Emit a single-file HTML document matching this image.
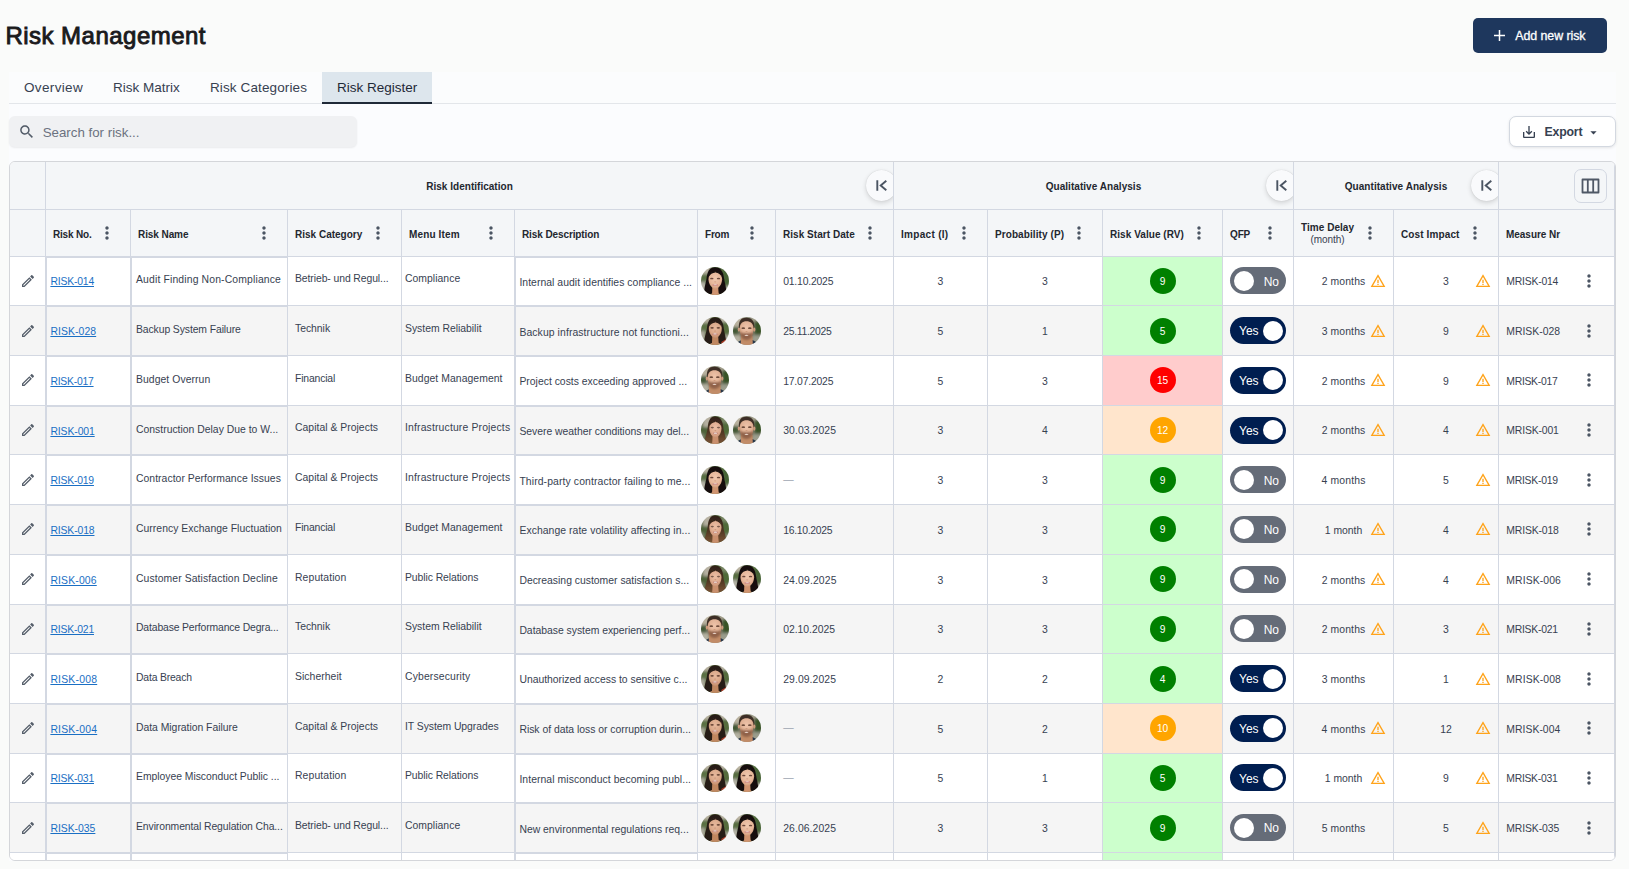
<!DOCTYPE html>
<html><head><meta charset="utf-8"><title>Risk Management</title><style>
*{box-sizing:border-box;margin:0;padding:0}
html,body{width:1629px;height:869px;overflow:hidden}
body{background:#fafbfa;font-family:"Liberation Sans",sans-serif;color:#1f2937;position:relative}
.abs{position:absolute}
h1{position:absolute;left:5.400px;top:20.200px;font-size:24px;line-height:32px;font-weight:400;color:#1a1a1c;-webkit-text-stroke:.9px #1a1a1c;letter-spacing:.48px;white-space:nowrap}
.addbtn{position:absolute;left:1473px;top:18px;width:134px;height:35px;border-radius:5px;background:#1e375d;color:#fff;font-size:12.4px;-webkit-text-stroke:.3px #fff}
.addbtn span{position:absolute;letter-spacing:-.07px;left:42.300px;top:10.800px;line-height:15px;white-space:nowrap}
.addbtn svg{position:absolute;left:20px;top:11px;width:13px;height:13px}
.tabs{position:absolute;left:9px;top:72px;width:1607px;height:32px;background:#fbfcfd;border-bottom:1px solid #e3e6ea}
.tab{position:absolute;top:0;height:32px;font-size:13.5px;line-height:16px;color:#374151;padding:7.500px 0 0 15px;white-space:nowrap}
.tab.on{background:#dde6ed;border-bottom:2px solid #1f2937;color:#1f2937}
.search{position:absolute;left:9px;top:116px;width:348px;height:31px;border-radius:6px;background:#f0f1f3;box-shadow:0 1px 2px rgba(0,0,0,.07)}
.search svg{position:absolute;left:8.800px;top:6.800px;width:17.500px;height:17.500px}
.search span{position:absolute;left:33.700px;top:8.500px;font-size:13.3px;line-height:16px;color:#6b7280;white-space:nowrap}
.export{position:absolute;left:1509px;top:116px;width:107px;height:31px;border-radius:7px;background:#fff;border:1px solid #d3d8e0;box-shadow:0 1px 3px rgba(0,0,0,.10)}
.export .dl{position:absolute;left:11.100px;top:7px;width:16px;height:16px}
.export span{position:absolute;left:34.600px;top:7px;letter-spacing:-.2px;font-size:12.300px;line-height:16px;font-weight:700;color:#374151;white-space:nowrap}
.export .car{position:absolute;left:76.100px;top:8px;width:15px;height:15px}

.tbl{position:absolute;left:9px;top:161px;width:1607px;height:700px;border:1px solid #d4d6da;border-radius:6px;overflow:hidden;background:#fff}
.hg,.hc{position:absolute;background:#f4f6f8;border-right:1px solid #d3d8e2;border-bottom:1px solid #d3d8e2;overflow:hidden}
.hg{top:0;height:48px}
.hc{top:48px;height:47px}
.hg .gl{position:absolute;left:0;right:0;top:18.800px;text-align:center;font-size:10px;line-height:12px;font-weight:700;color:#23272f;white-space:nowrap}
.coll{position:absolute;right:-4px;top:8px;width:31px;height:31px;border-radius:50%;background:#f9fafc;box-shadow:0 2px 5px rgba(0,0,0,.14),0 0 1px rgba(0,0,0,.18)}
.coll svg{position:absolute;left:8px;top:8px;width:15px;height:15px}
.colbtn{position:absolute;left:75px;top:7px;width:33px;height:34px;border:1px solid #d3d8e2;border-radius:7px}
.colbtn svg{position:absolute;left:6px;top:8px;width:19px;height:16px}
.hc .hl{position:absolute;left:7px;top:18.700px;font-size:10px;line-height:12px;font-weight:700;color:#23272f;white-space:nowrap}
.hc .hd{position:absolute;right:12.700px;top:13.200px;width:20px;height:20px}
.hc .hl.two{top:12px;text-align:center;line-height:12px}
.hc .hl.two small{display:block;font-weight:400;font-size:10px;color:#374151}

.row{position:absolute;left:0;width:1605px;background:#fff;border-bottom:1px solid #d3d8e2}
.row.alt{background:#f5f5f5}
.c{position:absolute;top:0;bottom:0;border-right:1px solid #d3d8e2;font-size:10.4px;color:#374151;white-space:nowrap;overflow:hidden}
.c.bx{border:1px solid #d3d8e2;border-bottom:none}
.c>span,.c>a{position:absolute;left:8px;top:50%;line-height:12px;margin-top:-4.7px}
.c>a{color:#1a6fc4;text-decoration:underline;left:3.4px;margin-top:-5px}
.c.bx>span{left:4px}
.c-desc.bx>span{left:3.400px}
.c-date>span{left:7.200px}
.c-date.dash>span{margin-top:-6.200px}
.c .up{margin-top:-7px}
.c .up2{margin-top:-7.7px}
.c-cat>span{left:7px}.c-menu>span{left:3px}
.c.ctr>span{left:0;right:0;text-align:center}
.pen{position:absolute;left:10px;top:50%;margin-top:-8px;width:16px;height:16px}
.av{position:absolute;top:50%;margin-top:-14px;width:28px;height:28px}
.dot{width:26px;height:26px;border-radius:50%;color:#fff;text-align:center;font-size:10.200px}
.c-rv .dot{left:50%;margin-left:-13px;margin-top:-13px;line-height:28.300px;height:26px}
.rv-g{background:#ccffcc}.rv-g .dot{background:#008000}
.rv-r{background:#ffcccc}.rv-r .dot{background:#ff0000}
.rv-o{background:#ffe5cc}.rv-o .dot{background:#ffa500}
.tg{left:7px!important;width:56px;height:27px;border-radius:13.5px;background:#656c78;margin-top:-13.5px!important;color:#fff}
.tg.on{background:#001e50}
.tg b{position:absolute;top:3.5px;left:4px;width:20px;height:20px;border-radius:50%;background:#fff}
.tg.on b{left:auto;right:3px}
.tg i{position:absolute;font-style:normal;font-size:12px;line-height:14px;top:7.300px;right:7px}
.tg.on i{right:auto;left:9px}
.warn{position:absolute;top:50%;margin-top:-8px;width:16px;height:16px}
.dots{position:absolute;top:50%;margin-top:-10px;width:20px;height:20px}
.dash>span{color:#9ca3af}
.c-from .av:nth-child(1){left:3px}
.c-from .av:nth-child(2){left:35px}
.c-td .tdt{left:0;width:99px;text-align:center;margin-left:0}
.c-td .warn{left:76px}
.c-ci .cit{left:0;width:104px;text-align:center}
.c-ci .warn{left:81px}
.c-mn .dots{left:80.100px}
.panel{position:absolute;left:9px;top:72px;width:1607px;height:789px;background:#fbfcfe}
.c-mn>span{letter-spacing:-.2px}
.c-mn>span{left:7.300px}
.dot.d2{letter-spacing:-.1px}

.c-edit,.h-edit{left:0px;width:36px}
.c-no,.h-no{left:36px;width:85px}
.c-name,.h-name{left:121px;width:157px}
.c-cat,.h-cat{left:278px;width:114px}
.c-menu,.h-menu{left:392px;width:113px}
.c-desc,.h-desc{left:505px;width:183px}
.c-from,.h-from{left:688px;width:78px}
.c-date,.h-date{left:766px;width:118px}
.c-imp,.h-imp{left:884px;width:94px}
.c-prob,.h-prob{left:978px;width:115px}
.c-rv,.h-rv{left:1093px;width:120px}
.c-qfp,.h-qfp{left:1213px;width:71px}
.c-td,.h-td{left:1284px;width:100px}
.c-ci,.h-ci{left:1384px;width:105px}
.c-mn,.h-mn{left:1489px;width:116px}
</style></head><body>
<svg width="0" height="0" style="position:absolute">
<defs>
<path id="i-edit" fill="#555e6a" d="m14.06 9.02.92.92L5.92 19H5v-.92zM17.66 3c-.25 0-.51.1-.7.29l-1.83 1.83 3.75 3.75 1.83-1.83c.39-.39.39-1.02 0-1.41l-2.34-2.34c-.2-.2-.45-.29-.71-.29m-3.6 3.19L3 17.25V21h3.75L17.81 9.94z"/>
<path id="i-dots" fill="#4b5563" d="M12 8c1.1 0 2-.9 2-2s-.9-2-2-2-2 .9-2 2 .9 2 2 2m0 2c-1.1 0-2 .9-2 2s.9 2 2 2 2-.9 2-2-.9-2-2-2m0 6c-1.1 0-2 .9-2 2s.9 2 2 2 2-.9 2-2-.9-2-2-2"/>
<g id="i-warn" fill="#ffa31a"><path d="M12 5.99 19.53 19H4.47zM12 2 1 21h22z"/><path d="M13 16h-2v2h2zm0-6h-2v5h2z"/></g>
<radialGradient id="skA" cx=".5" cy=".4" r=".62"><stop offset="0" stop-color="#f0c8ae"/><stop offset=".65" stop-color="#e6b699"/><stop offset="1" stop-color="#cf9877"/></radialGradient>
<radialGradient id="skB" cx=".5" cy=".4" r=".62"><stop offset="0" stop-color="#e7b99d"/><stop offset=".65" stop-color="#d9a788"/><stop offset="1" stop-color="#bf8867"/></radialGradient>
<radialGradient id="skC" cx=".5" cy=".4" r=".62"><stop offset="0" stop-color="#ebbfa5"/><stop offset=".65" stop-color="#deab8f"/><stop offset="1" stop-color="#c48d6e"/></radialGradient>
<radialGradient id="skM" cx=".5" cy=".35" r=".65"><stop offset="0" stop-color="#eec4aa"/><stop offset=".6" stop-color="#e0b195"/><stop offset="1" stop-color="#c08a69"/></radialGradient>
<linearGradient id="hC" x1="0" y1="0" x2="0" y2="1"><stop offset="0" stop-color="#2f2018"/><stop offset=".45" stop-color="#4a3221"/><stop offset="1" stop-color="#805a38"/></linearGradient>
<filter id="b3" x="-30%" y="-30%" width="160%" height="160%"><feGaussianBlur stdDeviation="1"/></filter>
<clipPath id="cc"><circle cx="14" cy="14" r="14"/></clipPath>
<filter id="b0" x="-20%" y="-20%" width="140%" height="140%"><feGaussianBlur stdDeviation="1.6"/></filter>
<filter id="b1" x="-20%" y="-20%" width="140%" height="140%"><feGaussianBlur stdDeviation="0.62"/></filter>
<filter id="b2" x="-20%" y="-20%" width="140%" height="140%"><feGaussianBlur stdDeviation="0.5"/></filter>
<g id="av-A" clip-path="url(#cc)">
<g filter="url(#b0)">
<rect x="-4" y="-4" width="36" height="36" fill="#586e43"/>
<rect x="-4" y="-4" width="13" height="11" fill="#b9b3a2"/>
<rect x="-4" y="15" width="9" height="17" fill="#b4b2a6"/>
<rect x="22" y="2" width="10" height="17" fill="#466336"/>
<rect x="23" y="19" width="9" height="13" fill="#a5a696"/>
</g>
<g filter="url(#b1)">
<path d="M14 .2C8 .2 6.200 5.500 5.600 11 5 16 3.200 20 3.200 25.500L10 30h9l6.300-4.500C25.300 20 23.600 15 23 11 22.400 5 20 .2 14 .2Z" fill="#15100e"/>
<ellipse cx="14.300" cy="29.500" rx="6.500" ry="3.500" fill="#dca180"/><path d="M11.400 19 10.900 30h7l-.8-11Z" fill="#d0946f"/>
<path d="M14.300 4.800C10.200 4.800 7.500 8 7.500 12.300 7.500 17.200 10.800 21.800 14.300 21.800S21.100 17.200 21.100 12.300C21.100 8 18.300 4.800 14.300 4.800Z" fill="url(#skA)"/>
<path d="M7.600 10C8 6.500 10.500 4.300 14.500 4.300L14.300 5.600C11.500 5.800 9 7.500 7.600 10Z" fill="#15100e"/>
<path d="M21 10.500C20.600 6.800 18 4.300 14.300 4.300L14.500 5.600C17.500 5.800 19.800 7.800 21 10.500Z" fill="#15100e"/>
</g>
<g filter="url(#b2)">
<ellipse cx="10.800" cy="11.500" rx="1.700" ry=".85" fill="#6d4a3c"/>
<ellipse cx="17.500" cy="11.500" rx="1.700" ry=".85" fill="#6d4a3c"/>
<ellipse cx="14.200" cy="14.800" rx="1.100" ry=".6" fill="#d49f86"/>
<ellipse cx="14.200" cy="18" rx="3" ry="1.050" fill="#cc827a"/>
<ellipse cx="14.200" cy="17.700" rx="1.900" ry=".55" fill="#f0dfd6"/>
</g></g>
<g id="av-B" clip-path="url(#cc)">
<g filter="url(#b0)">
<rect x="-4" y="-4" width="36" height="36" fill="#5a6f43"/>
<rect x="-4" y="-4" width="13" height="10" fill="#b5af9e"/>
<rect x="-4" y="14" width="8" height="18" fill="#aeab9d"/>
<rect x="19" y="-4" width="9" height="9" fill="#bfbaab"/>
<rect x="22" y="5" width="10" height="14" fill="#546c3d"/>
<rect x="23" y="18" width="9" height="14" fill="#a8a898"/>
</g>
<g filter="url(#b1)">
<path d="M14 .2C8.500 .2 6.500 5.500 6 11 5.400 16 3.200 20 3.200 25.500L10 30h9l6.200-5C24.700 20 23.300 15 22.800 11 22.200 5 19.500 .2 14 .2Z" fill="#281c16"/>
<path d="M20.300 25 24.800 22.300 25.500 26.500 21 29.500Z" fill="#b03a28"/>
<ellipse cx="14.300" cy="29.300" rx="6.500" ry="3.800" fill="#cf9773"/><path d="M11.300 18.500 10.800 30h7.200l-.9-11.500Z" fill="#c08761"/>
<path d="M14.300 4.600C10.400 4.600 7.800 7.600 7.800 11.800 7.800 16.500 11 21 14.300 21S20.800 16.500 20.800 11.800C20.800 7.600 18.100 4.600 14.300 4.600Z" fill="url(#skB)"/>
<path d="M8 9.500C8.400 6.200 10.800 4.100 14.500 4.100L14.300 5.400C11.700 5.600 9.300 7.200 8 9.500Z" fill="#281c16"/>
<path d="M20.600 10C20.200 6.500 17.800 4.100 14.300 4.100L14.500 5.400C17.300 5.600 19.500 7.500 20.600 10Z" fill="#281c16"/>
</g>
<g filter="url(#b2)">
<ellipse cx="11.100" cy="10.800" rx="1.700" ry=".85" fill="#694738"/>
<ellipse cx="17.300" cy="10.800" rx="1.700" ry=".85" fill="#694738"/>
<ellipse cx="14.100" cy="14" rx="1.100" ry=".6" fill="#c99478"/>
<ellipse cx="14" cy="17.200" rx="2.900" ry="1.050" fill="#c17f74"/>
<ellipse cx="14" cy="16.900" rx="1.800" ry=".55" fill="#e9dbd1"/>
</g></g>
<g id="av-C" clip-path="url(#cc)">
<g filter="url(#b0)">
<rect x="-4" y="-4" width="36" height="36" fill="#4d6238"/>
<rect x="2" y="-4" width="9" height="15" fill="#b6b0a0"/>
<rect x="-4" y="18" width="7" height="14" fill="#8a8d7a"/>
<rect x="20" y="-4" width="12" height="11" fill="#7a8866"/>
<rect x="22" y="8" width="10" height="12" fill="#506a37"/>
<rect x="24" y="19" width="8" height="13" fill="#8d9280"/>
</g>
<g filter="url(#b1)">
<path d="M14 .5C9 .5 7.200 5.500 6.800 11 6.400 16 4.200 20 3.700 26L10 30h9l6.200-4.500C24.700 20 22.500 15 22.200 11 21.800 5 19 .5 14 .5Z" fill="url(#hC)"/>
<ellipse cx="14.400" cy="29.500" rx="5.500" ry="3.300" fill="#d8a080"/><path d="M11.600 19 11.100 30h6.800l-.8-11Z" fill="#c98f6d"/>
<path d="M14.400 5C10.800 5 8.300 8 8.300 12.200 8.300 17 11.200 21.500 14.400 21.500S20.500 17 20.500 12.200C20.500 8 17.900 5 14.400 5Z" fill="url(#skC)"/>
<path d="M8.400 10C8.800 6.600 11 4.500 14.600 4.500L14.400 5.900C12 6.100 9.700 7.700 8.400 10Z" fill="#36251a"/>
<path d="M20.400 10.500C20 7 17.800 4.500 14.400 4.500L14.600 5.900C17.200 6.100 19.300 8 20.400 10.500Z" fill="#36251a"/>
</g>
<g filter="url(#b2)">
<ellipse cx="11.300" cy="11.600" rx="1.600" ry=".8" fill="#7a5c4e"/>
<ellipse cx="17.500" cy="11.600" rx="1.600" ry=".8" fill="#7a5c4e"/>
<ellipse cx="14.400" cy="14.600" rx="1" ry=".6" fill="#cb977d"/>
<ellipse cx="14.400" cy="17.300" rx="2.600" ry="1.100" fill="#c28075"/>
<ellipse cx="14.400" cy="17.200" rx="1.700" ry=".65" fill="#efe4db"/>
</g></g>
<g id="av-M" clip-path="url(#cc)">
<g filter="url(#b0)">
<rect x="-4" y="-4" width="36" height="36" fill="#888b78"/>
<rect x="-4" y="-4" width="14" height="14" fill="#b8b19e"/>
<rect x="-4" y="10" width="10" height="8" fill="#425836"/>
<rect x="-4" y="18" width="12" height="14" fill="#b3b0a0"/>
<rect x="19" y="-4" width="6" height="9" fill="#a8a390"/>
<rect x="21" y="4" width="11" height="14" fill="#375225"/>
<rect x="19" y="18" width="13" height="14" fill="#9a9c8c"/>
</g>
<g filter="url(#b1)">
<path d="M4 25.500 8.500 23 19.500 23 24 25.500 22 30 6 30Z" fill="#25354a"/>
<path d="M13.200 .8C8 .8 5.600 4 5.800 10.500L7.500 12.500 20 12.500 21.400 10.500C21.600 4 18.500 .8 13.200 .8Z" fill="#3d2f25"/>
<path d="M8 19 7.600 30h12.300L19.500 19Z" fill="#c28c68"/>
<ellipse cx="5.900" cy="12.600" rx="1.100" ry="2.100" fill="#cf9b7e"/>
<ellipse cx="21.300" cy="12.600" rx="1.100" ry="2.100" fill="#cf9b7e"/>
<path d="M13.500 4.300C9.500 4.300 6.700 6.500 6.700 11.500 6.700 17.500 9.800 22.600 13.500 22.600S20.500 17.500 20.500 11.500C20.500 6.500 17.500 4.300 13.500 4.300Z" fill="url(#skM)"/>
</g>
<g filter="url(#b3)"><path d="M6.800 14C6.900 20.500 10 22.800 13.500 22.800S20.200 20.500 20.400 14C19.200 16.500 17 16.300 13.500 16.300S8 16.500 6.800 14Z" fill="#7c5139" opacity=".78"/></g>
<g filter="url(#b2)">
<ellipse cx="10.300" cy="11.200" rx="1.800" ry=".9" fill="#6d4b3b"/>
<ellipse cx="16.800" cy="11.200" rx="1.800" ry=".9" fill="#6d4b3b"/>
<ellipse cx="13.500" cy="14.500" rx="1.200" ry=".6" fill="#cf9a7d"/>
<ellipse cx="13.500" cy="18.200" rx="2.700" ry="1.100" fill="#9a6a55"/><ellipse cx="13.500" cy="18.300" rx="1.900" ry=".65" fill="#ead7ca"/>
</g></g>
</defs>
</svg>

<div class="panel"></div>
<h1>Risk Management</h1>
<div class="addbtn"><svg viewBox="0 0 13 13"><path d="M6.5 1v11M1 6.5h11" stroke="#fff" stroke-width="1.5" fill="none"/></svg><span>Add new risk</span></div>
<div class="tabs">
<div class="tab" style="left:0;width:89px;letter-spacing:.35px">Overview</div>
<div class="tab" style="left:89px;width:97px">Risk Matrix</div>
<div class="tab" style="left:186px;width:127px;letter-spacing:.12px">Risk Categories</div>
<div class="tab on" style="left:313px;width:110px">Risk Register</div>
</div>
<div class="search"><svg viewBox="0 0 24 24"><path fill="#535c69" d="M15.5 14h-.79l-.28-.27C15.41 12.59 16 11.11 16 9.5 16 5.91 13.09 3 9.5 3S3 5.91 3 9.5 5.91 16 9.5 16c1.61 0 3.09-.59 4.23-1.57l.27.28v.79l5 4.99L20.49 19zm-6 0C7.01 14 5 11.99 5 9.5S7.01 5 9.5 5 14 7.01 14 9.5 11.990 14 9.5 14"/></svg><span>Search for risk...</span></div>
<div class="export"><svg class="dl" viewBox="0 0 24 24"><path fill="#374151" d="M19 12v7H5v-7H3v7c0 1.1.9 2 2 2h14c1.1 0 2-.9 2-2v-7zm-6 .67 2.59-2.58L17 11.500l-5 5-5-5 1.41-1.41L11 12.67V3h2z"/></svg><span>Export</span><svg class="car" viewBox="0 0 24 24"><path fill="#374151" d="m7 10 5 5 5-5z"/></svg></div>

<div class="tbl">
<div class="hg" style="left:0px;width:36px"></div>
<div class="hg" style="left:36px;width:848px"><div class="gl" style="letter-spacing:0.021px">Risk Identification</div><div class="coll"><svg viewBox="0 0 15 15"><path d="M3.300 2.300v10.400M12.300 2.800 6.700 7.500l5.600 4.700" stroke="#4b5563" stroke-width="1.900" fill="none"/></svg></div></div>
<div class="hg" style="left:884px;width:400px"><div class="gl" style="letter-spacing:0.044px">Qualitative Analysis</div><div class="coll"><svg viewBox="0 0 15 15"><path d="M3.300 2.300v10.400M12.300 2.800 6.700 7.500l5.600 4.700" stroke="#4b5563" stroke-width="1.900" fill="none"/></svg></div></div>
<div class="hg" style="left:1284px;width:205px"><div class="gl" style="letter-spacing:0.059px">Quantitative Analysis</div><div class="coll"><svg viewBox="0 0 15 15"><path d="M3.300 2.300v10.400M12.300 2.800 6.700 7.500l5.600 4.700" stroke="#4b5563" stroke-width="1.900" fill="none"/></svg></div></div>
<div class="hg" style="left:1489px;width:116px"><div class="colbtn"><svg viewBox="0 0 19 16"><path d="M1.5 1.5h16v13h-16zM6.8 1.5v13M12.200 1.5v13" stroke="#4f5866" stroke-width="1.800" fill="none" stroke-linejoin="round"/></svg></div></div>
<div class="hc h-edit"></div>
<div class="hc h-no"><div class="hl" style="letter-spacing:-0.188px">Risk No.</div><svg class="hd" viewBox="0 0 24 24"><use href="#i-dots"/></svg></div>
<div class="hc h-name"><div class="hl" style="letter-spacing:-0.080px">Risk Name</div><svg class="hd" viewBox="0 0 24 24"><use href="#i-dots"/></svg></div>
<div class="hc h-cat"><div class="hl" style="letter-spacing:0.004px">Risk Category</div><svg class="hd" viewBox="0 0 24 24"><use href="#i-dots"/></svg></div>
<div class="hc h-menu"><div class="hl" style="letter-spacing:0.143px">Menu Item</div><svg class="hd" viewBox="0 0 24 24"><use href="#i-dots"/></svg></div>
<div class="hc h-desc"><div class="hl" style="letter-spacing:-0.101px">Risk Description</div></div>
<div class="hc h-from"><div class="hl" style="letter-spacing:-0.233px">From</div><svg class="hd" viewBox="0 0 24 24"><use href="#i-dots"/></svg></div>
<div class="hc h-date"><div class="hl" style="letter-spacing:0.040px">Risk Start Date</div><svg class="hd" viewBox="0 0 24 24"><use href="#i-dots"/></svg></div>
<div class="hc h-imp"><div class="hl" style="letter-spacing:0.305px">Impact (I)</div><svg class="hd" viewBox="0 0 24 24"><use href="#i-dots"/></svg></div>
<div class="hc h-prob"><div class="hl" style="letter-spacing:0.086px">Probability (P)</div><svg class="hd" viewBox="0 0 24 24"><use href="#i-dots"/></svg></div>
<div class="hc h-rv"><div class="hl" style="letter-spacing:0.051px">Risk Value (RV)</div><svg class="hd" viewBox="0 0 24 24"><use href="#i-dots"/></svg></div>
<div class="hc h-qfp"><div class="hl" style="letter-spacing:-0.131px">QFP</div><svg class="hd" viewBox="0 0 24 24"><use href="#i-dots"/></svg></div>
<div class="hc h-td"><div class="hl two"><span style="letter-spacing:0.042px">Time Delay</span><small style="letter-spacing:-0.092px">(month)</small></div><svg class="hd" viewBox="0 0 24 24"><use href="#i-dots"/></svg></div>
<div class="hc h-ci"><div class="hl" style="letter-spacing:0.117px">Cost Impact</div><svg class="hd" viewBox="0 0 24 24"><use href="#i-dots"/></svg></div>
<div class="hc h-mn"><div class="hl" style="letter-spacing:-0.030px">Measure Nr</div></div>
<div class="row" style="top:94.65px;height:49.7px">
<div class="c c-edit"><svg class="pen" viewBox="0 0 24 24"><use href="#i-edit"/></svg></div>
<div class="c c-no bx"><a style="letter-spacing:-0.180px">RISK-014</a></div>
<div class="c c-name bx"><span class="up" style="letter-spacing:0.147px">Audit Finding Non-Compliance</span></div>
<div class="c c-cat"><span class="up2" style="letter-spacing:-0.086px">Betrieb- und Regul...</span></div>
<div class="c c-menu"><span class="up2" style="letter-spacing:0.036px">Compliance</span></div>
<div class="c c-desc bx"><span style="letter-spacing:0.042px">Internal audit identifies compliance ...</span></div>
<div class="c c-from"><svg class="av" viewBox="0 0 28 28"><use href="#av-A"/></svg></div>
<div class="c c-date"><span style="letter-spacing:-0.191px">01.10.2025</span></div>
<div class="c c-imp ctr"><span>3</span></div>
<div class="c c-prob ctr"><span>3</span></div>
<div class="c c-rv rv-g"><span class="dot">9</span></div>
<div class="c c-qfp"><span class="tg"><b></b><i>No</i></span></div>
<div class="c c-td"><span class="tdt" style="letter-spacing:0.121px">2 months</span><svg class="warn" viewBox="0 0 24 24"><use href="#i-warn"/></svg></div>
<div class="c c-ci"><span class="cit">3</span><svg class="warn" viewBox="0 0 24 24"><use href="#i-warn"/></svg></div>
<div class="c c-mn"><span style="letter-spacing:-0.202px">MRISK-014</span><svg class="dots" viewBox="0 0 24 24"><use href="#i-dots"/></svg></div>
</div>
<div class="row alt" style="top:144.35px;height:49.7px">
<div class="c c-edit"><svg class="pen" viewBox="0 0 24 24"><use href="#i-edit"/></svg></div>
<div class="c c-no bx"><a style="letter-spacing:0.091px">RISK-028</a></div>
<div class="c c-name bx"><span class="up" style="letter-spacing:-0.097px">Backup System Failure</span></div>
<div class="c c-cat"><span class="up2" style="letter-spacing:-0.022px">Technik</span></div>
<div class="c c-menu"><span class="up2" style="letter-spacing:-0.013px">System Reliabilit</span></div>
<div class="c c-desc bx"><span style="letter-spacing:0.098px">Backup infrastructure not functioni...</span></div>
<div class="c c-from"><svg class="av" viewBox="0 0 28 28"><use href="#av-B"/></svg><svg class="av" viewBox="0 0 28 28"><use href="#av-M"/></svg></div>
<div class="c c-date"><span style="letter-spacing:-0.293px">25.11.2025</span></div>
<div class="c c-imp ctr"><span>5</span></div>
<div class="c c-prob ctr"><span>1</span></div>
<div class="c c-rv rv-g"><span class="dot">5</span></div>
<div class="c c-qfp"><span class="tg on"><i>Yes</i><b></b></span></div>
<div class="c c-td"><span class="tdt" style="letter-spacing:0.121px">3 months</span><svg class="warn" viewBox="0 0 24 24"><use href="#i-warn"/></svg></div>
<div class="c c-ci"><span class="cit">9</span><svg class="warn" viewBox="0 0 24 24"><use href="#i-warn"/></svg></div>
<div class="c c-mn"><span style="letter-spacing:-0.002px">MRISK-028</span><svg class="dots" viewBox="0 0 24 24"><use href="#i-dots"/></svg></div>
</div>
<div class="row" style="top:194.05px;height:49.7px">
<div class="c c-edit"><svg class="pen" viewBox="0 0 24 24"><use href="#i-edit"/></svg></div>
<div class="c c-no bx"><a style="letter-spacing:-0.238px">RISK-017</a></div>
<div class="c c-name bx"><span class="up" style="letter-spacing:0.065px">Budget Overrun</span></div>
<div class="c c-cat"><span class="up2" style="letter-spacing:-0.162px">Financial</span></div>
<div class="c c-menu"><span class="up2" style="letter-spacing:0.064px">Budget Management</span></div>
<div class="c c-desc bx"><span style="letter-spacing:0.006px">Project costs exceeding approved ...</span></div>
<div class="c c-from"><svg class="av" viewBox="0 0 28 28"><use href="#av-M"/></svg></div>
<div class="c c-date"><span style="letter-spacing:-0.191px">17.07.2025</span></div>
<div class="c c-imp ctr"><span>5</span></div>
<div class="c c-prob ctr"><span>3</span></div>
<div class="c c-rv rv-r"><span class="dot d2">15</span></div>
<div class="c c-qfp"><span class="tg on"><i>Yes</i><b></b></span></div>
<div class="c c-td"><span class="tdt" style="letter-spacing:0.121px">2 months</span><svg class="warn" viewBox="0 0 24 24"><use href="#i-warn"/></svg></div>
<div class="c c-ci"><span class="cit">9</span><svg class="warn" viewBox="0 0 24 24"><use href="#i-warn"/></svg></div>
<div class="c c-mn"><span style="letter-spacing:-0.290px">MRISK-017</span><svg class="dots" viewBox="0 0 24 24"><use href="#i-dots"/></svg></div>
</div>
<div class="row alt" style="top:243.75px;height:49.7px">
<div class="c c-edit"><svg class="pen" viewBox="0 0 24 24"><use href="#i-edit"/></svg></div>
<div class="c c-no bx"><a style="letter-spacing:-0.095px">RISK-001</a></div>
<div class="c c-name bx"><span class="up" style="letter-spacing:0.004px">Construction Delay Due to W...</span></div>
<div class="c c-cat"><span class="up2" style="letter-spacing:0.024px">Capital &amp; Projects</span></div>
<div class="c c-menu"><span class="up2" style="letter-spacing:0.157px">Infrastructure Projects</span></div>
<div class="c c-desc bx"><span style="letter-spacing:-0.020px">Severe weather conditions may del...</span></div>
<div class="c c-from"><svg class="av" viewBox="0 0 28 28"><use href="#av-C"/></svg><svg class="av" viewBox="0 0 28 28"><use href="#av-M"/></svg></div>
<div class="c c-date"><span style="letter-spacing:0.087px">30.03.2025</span></div>
<div class="c c-imp ctr"><span>3</span></div>
<div class="c c-prob ctr"><span>4</span></div>
<div class="c c-rv rv-o"><span class="dot d2">12</span></div>
<div class="c c-qfp"><span class="tg on"><i>Yes</i><b></b></span></div>
<div class="c c-td"><span class="tdt" style="letter-spacing:0.121px">2 months</span><svg class="warn" viewBox="0 0 24 24"><use href="#i-warn"/></svg></div>
<div class="c c-ci"><span class="cit">4</span><svg class="warn" viewBox="0 0 24 24"><use href="#i-warn"/></svg></div>
<div class="c c-mn"><span style="letter-spacing:-0.152px">MRISK-001</span><svg class="dots" viewBox="0 0 24 24"><use href="#i-dots"/></svg></div>
</div>
<div class="row" style="top:293.45px;height:49.7px">
<div class="c c-edit"><svg class="pen" viewBox="0 0 24 24"><use href="#i-edit"/></svg></div>
<div class="c c-no bx"><a style="letter-spacing:-0.188px">RISK-019</a></div>
<div class="c c-name bx"><span class="up" style="letter-spacing:0.039px">Contractor Performance Issues</span></div>
<div class="c c-cat"><span class="up2" style="letter-spacing:0.024px">Capital &amp; Projects</span></div>
<div class="c c-menu"><span class="up2" style="letter-spacing:0.157px">Infrastructure Projects</span></div>
<div class="c c-desc bx"><span style="letter-spacing:0.111px">Third-party contractor failing to me...</span></div>
<div class="c c-from"><svg class="av" viewBox="0 0 28 28"><use href="#av-A"/></svg></div>
<div class="c c-date dash"><span>—</span></div>
<div class="c c-imp ctr"><span>3</span></div>
<div class="c c-prob ctr"><span>3</span></div>
<div class="c c-rv rv-g"><span class="dot">9</span></div>
<div class="c c-qfp"><span class="tg"><b></b><i>No</i></span></div>
<div class="c c-td"><span class="tdt" style="letter-spacing:0.179px">4 months</span></div>
<div class="c c-ci"><span class="cit">5</span><svg class="warn" viewBox="0 0 24 24"><use href="#i-warn"/></svg></div>
<div class="c c-mn"><span style="letter-spacing:-0.252px">MRISK-019</span><svg class="dots" viewBox="0 0 24 24"><use href="#i-dots"/></svg></div>
</div>
<div class="row alt" style="top:343.15px;height:49.7px">
<div class="c c-edit"><svg class="pen" viewBox="0 0 24 24"><use href="#i-edit"/></svg></div>
<div class="c c-no bx"><a style="letter-spacing:-0.123px">RISK-018</a></div>
<div class="c c-name bx"><span class="up" style="letter-spacing:0.033px">Currency Exchange Fluctuation</span></div>
<div class="c c-cat"><span class="up2" style="letter-spacing:-0.162px">Financial</span></div>
<div class="c c-menu"><span class="up2" style="letter-spacing:0.064px">Budget Management</span></div>
<div class="c c-desc bx"><span style="letter-spacing:0.062px">Exchange rate volatility affecting in...</span></div>
<div class="c c-from"><svg class="av" viewBox="0 0 28 28"><use href="#av-C"/></svg></div>
<div class="c c-date"><span style="letter-spacing:-0.291px">16.10.2025</span></div>
<div class="c c-imp ctr"><span>3</span></div>
<div class="c c-prob ctr"><span>3</span></div>
<div class="c c-rv rv-g"><span class="dot">9</span></div>
<div class="c c-qfp"><span class="tg"><b></b><i>No</i></span></div>
<div class="c c-td"><span class="tdt" style="letter-spacing:-0.008px">1 month</span><svg class="warn" viewBox="0 0 24 24"><use href="#i-warn"/></svg></div>
<div class="c c-ci"><span class="cit">4</span><svg class="warn" viewBox="0 0 24 24"><use href="#i-warn"/></svg></div>
<div class="c c-mn"><span style="letter-spacing:-0.140px">MRISK-018</span><svg class="dots" viewBox="0 0 24 24"><use href="#i-dots"/></svg></div>
</div>
<div class="row" style="top:392.85px;height:49.7px">
<div class="c c-edit"><svg class="pen" viewBox="0 0 24 24"><use href="#i-edit"/></svg></div>
<div class="c c-no bx"><a style="letter-spacing:0.163px">RISK-006</a></div>
<div class="c c-name bx"><span class="up" style="letter-spacing:0.090px">Customer Satisfaction Decline</span></div>
<div class="c c-cat"><span class="up2" style="letter-spacing:0.115px">Reputation</span></div>
<div class="c c-menu"><span class="up2" style="letter-spacing:-0.074px">Public Relations</span></div>
<div class="c c-desc bx"><span style="letter-spacing:-0.003px">Decreasing customer satisfaction s...</span></div>
<div class="c c-from"><svg class="av" viewBox="0 0 28 28"><use href="#av-C"/></svg><svg class="av" viewBox="0 0 28 28"><use href="#av-A"/></svg></div>
<div class="c c-date"><span style="letter-spacing:0.143px">24.09.2025</span></div>
<div class="c c-imp ctr"><span>3</span></div>
<div class="c c-prob ctr"><span>3</span></div>
<div class="c c-rv rv-g"><span class="dot">9</span></div>
<div class="c c-qfp"><span class="tg"><b></b><i>No</i></span></div>
<div class="c c-td"><span class="tdt" style="letter-spacing:0.121px">2 months</span><svg class="warn" viewBox="0 0 24 24"><use href="#i-warn"/></svg></div>
<div class="c c-ci"><span class="cit">4</span><svg class="warn" viewBox="0 0 24 24"><use href="#i-warn"/></svg></div>
<div class="c c-mn"><span style="letter-spacing:0.110px">MRISK-006</span><svg class="dots" viewBox="0 0 24 24"><use href="#i-dots"/></svg></div>
</div>
<div class="row alt" style="top:442.55px;height:49.7px">
<div class="c c-edit"><svg class="pen" viewBox="0 0 24 24"><use href="#i-edit"/></svg></div>
<div class="c c-no bx"><a style="letter-spacing:-0.180px">RISK-021</a></div>
<div class="c c-name bx"><span class="up" style="letter-spacing:-0.143px">Database Performance Degra...</span></div>
<div class="c c-cat"><span class="up2" style="letter-spacing:-0.022px">Technik</span></div>
<div class="c c-menu"><span class="up2" style="letter-spacing:-0.013px">System Reliabilit</span></div>
<div class="c c-desc bx"><span style="letter-spacing:-0.024px">Database system experiencing perf...</span></div>
<div class="c c-from"><svg class="av" viewBox="0 0 28 28"><use href="#av-M"/></svg></div>
<div class="c c-date"><span style="letter-spacing:-0.024px">02.10.2025</span></div>
<div class="c c-imp ctr"><span>3</span></div>
<div class="c c-prob ctr"><span>3</span></div>
<div class="c c-rv rv-g"><span class="dot">9</span></div>
<div class="c c-qfp"><span class="tg"><b></b><i>No</i></span></div>
<div class="c c-td"><span class="tdt" style="letter-spacing:0.121px">2 months</span><svg class="warn" viewBox="0 0 24 24"><use href="#i-warn"/></svg></div>
<div class="c c-ci"><span class="cit">3</span><svg class="warn" viewBox="0 0 24 24"><use href="#i-warn"/></svg></div>
<div class="c c-mn"><span style="letter-spacing:-0.240px">MRISK-021</span><svg class="dots" viewBox="0 0 24 24"><use href="#i-dots"/></svg></div>
</div>
<div class="row" style="top:492.25px;height:49.7px">
<div class="c c-edit"><svg class="pen" viewBox="0 0 24 24"><use href="#i-edit"/></svg></div>
<div class="c c-no bx"><a style="letter-spacing:0.220px">RISK-008</a></div>
<div class="c c-name bx"><span class="up" style="letter-spacing:-0.177px">Data Breach</span></div>
<div class="c c-cat"><span class="up2" style="letter-spacing:0.053px">Sicherheit</span></div>
<div class="c c-menu"><span class="up2" style="letter-spacing:0.147px">Cybersecurity</span></div>
<div class="c c-desc bx"><span style="letter-spacing:-0.018px">Unauthorized access to sensitive c...</span></div>
<div class="c c-from"><svg class="av" viewBox="0 0 28 28"><use href="#av-B"/></svg></div>
<div class="c c-date"><span style="letter-spacing:0.087px">29.09.2025</span></div>
<div class="c c-imp ctr"><span>2</span></div>
<div class="c c-prob ctr"><span>2</span></div>
<div class="c c-rv rv-g"><span class="dot">4</span></div>
<div class="c c-qfp"><span class="tg on"><i>Yes</i><b></b></span></div>
<div class="c c-td"><span class="tdt" style="letter-spacing:0.121px">3 months</span></div>
<div class="c c-ci"><span class="cit">1</span><svg class="warn" viewBox="0 0 24 24"><use href="#i-warn"/></svg></div>
<div class="c c-mn"><span style="letter-spacing:0.110px">MRISK-008</span><svg class="dots" viewBox="0 0 24 24"><use href="#i-dots"/></svg></div>
</div>
<div class="row alt" style="top:541.95px;height:49.7px">
<div class="c c-edit"><svg class="pen" viewBox="0 0 24 24"><use href="#i-edit"/></svg></div>
<div class="c c-no bx"><a style="letter-spacing:0.220px">RISK-004</a></div>
<div class="c c-name bx"><span class="up" style="letter-spacing:-0.025px">Data Migration Failure</span></div>
<div class="c c-cat"><span class="up2" style="letter-spacing:0.024px">Capital &amp; Projects</span></div>
<div class="c c-menu"><span class="up2" style="letter-spacing:-0.054px">IT System Upgrades</span></div>
<div class="c c-desc bx"><span style="letter-spacing:-0.013px">Risk of data loss or corruption durin...</span></div>
<div class="c c-from"><svg class="av" viewBox="0 0 28 28"><use href="#av-B"/></svg><svg class="av" viewBox="0 0 28 28"><use href="#av-M"/></svg></div>
<div class="c c-date dash"><span>—</span></div>
<div class="c c-imp ctr"><span>5</span></div>
<div class="c c-prob ctr"><span>2</span></div>
<div class="c c-rv rv-o"><span class="dot d2">10</span></div>
<div class="c c-qfp"><span class="tg on"><i>Yes</i><b></b></span></div>
<div class="c c-td"><span class="tdt" style="letter-spacing:0.179px">4 months</span><svg class="warn" viewBox="0 0 24 24"><use href="#i-warn"/></svg></div>
<div class="c c-ci"><span class="cit">12</span><svg class="warn" viewBox="0 0 24 24"><use href="#i-warn"/></svg></div>
<div class="c c-mn"><span style="letter-spacing:0.035px">MRISK-004</span><svg class="dots" viewBox="0 0 24 24"><use href="#i-dots"/></svg></div>
</div>
<div class="row" style="top:591.65px;height:49.7px">
<div class="c c-edit"><svg class="pen" viewBox="0 0 24 24"><use href="#i-edit"/></svg></div>
<div class="c c-no bx"><a style="letter-spacing:-0.180px">RISK-031</a></div>
<div class="c c-name bx"><span class="up" style="letter-spacing:-0.034px">Employee Misconduct Public ...</span></div>
<div class="c c-cat"><span class="up2" style="letter-spacing:0.115px">Reputation</span></div>
<div class="c c-menu"><span class="up2" style="letter-spacing:-0.074px">Public Relations</span></div>
<div class="c c-desc bx"><span style="letter-spacing:0.068px">Internal misconduct becoming publ...</span></div>
<div class="c c-from"><svg class="av" viewBox="0 0 28 28"><use href="#av-B"/></svg><svg class="av" viewBox="0 0 28 28"><use href="#av-A"/></svg></div>
<div class="c c-date dash"><span>—</span></div>
<div class="c c-imp ctr"><span>5</span></div>
<div class="c c-prob ctr"><span>1</span></div>
<div class="c c-rv rv-g"><span class="dot">5</span></div>
<div class="c c-qfp"><span class="tg on"><i>Yes</i><b></b></span></div>
<div class="c c-td"><span class="tdt" style="letter-spacing:-0.008px">1 month</span><svg class="warn" viewBox="0 0 24 24"><use href="#i-warn"/></svg></div>
<div class="c c-ci"><span class="cit">9</span><svg class="warn" viewBox="0 0 24 24"><use href="#i-warn"/></svg></div>
<div class="c c-mn"><span style="letter-spacing:-0.290px">MRISK-031</span><svg class="dots" viewBox="0 0 24 24"><use href="#i-dots"/></svg></div>
</div>
<div class="row alt" style="top:641.35px;height:49.7px">
<div class="c c-edit"><svg class="pen" viewBox="0 0 24 24"><use href="#i-edit"/></svg></div>
<div class="c c-no bx"><a style="letter-spacing:-0.009px">RISK-035</a></div>
<div class="c c-name bx"><span class="up" style="letter-spacing:-0.093px">Environmental Regulation Cha...</span></div>
<div class="c c-cat"><span class="up2" style="letter-spacing:-0.086px">Betrieb- und Regul...</span></div>
<div class="c c-menu"><span class="up2" style="letter-spacing:0.036px">Compliance</span></div>
<div class="c c-desc bx"><span style="letter-spacing:0.005px">New environmental regulations req...</span></div>
<div class="c c-from"><svg class="av" viewBox="0 0 28 28"><use href="#av-B"/></svg><svg class="av" viewBox="0 0 28 28"><use href="#av-A"/></svg></div>
<div class="c c-date"><span style="letter-spacing:0.087px">26.06.2025</span></div>
<div class="c c-imp ctr"><span>3</span></div>
<div class="c c-prob ctr"><span>3</span></div>
<div class="c c-rv rv-g"><span class="dot">9</span></div>
<div class="c c-qfp"><span class="tg"><b></b><i>No</i></span></div>
<div class="c c-td"><span class="tdt" style="letter-spacing:0.121px">5 months</span></div>
<div class="c c-ci"><span class="cit">5</span><svg class="warn" viewBox="0 0 24 24"><use href="#i-warn"/></svg></div>
<div class="c c-mn"><span style="letter-spacing:-0.102px">MRISK-035</span><svg class="dots" viewBox="0 0 24 24"><use href="#i-dots"/></svg></div>
</div>
<div class="row" style="top:691.05px;height:20px;border-bottom:none">
<div class="c c-edit"></div>
<div class="c c-no bx"></div>
<div class="c c-name bx"></div>
<div class="c c-cat"></div>
<div class="c c-menu"></div>
<div class="c c-desc bx"></div>
<div class="c c-from"></div>
<div class="c c-date"></div>
<div class="c c-imp"></div>
<div class="c c-prob"></div>
<div class="c c-rv rv-g"></div>
<div class="c c-qfp"></div>
<div class="c c-td"></div>
<div class="c c-ci"></div>
<div class="c c-mn"></div>
</div>
</div>
</body></html>
